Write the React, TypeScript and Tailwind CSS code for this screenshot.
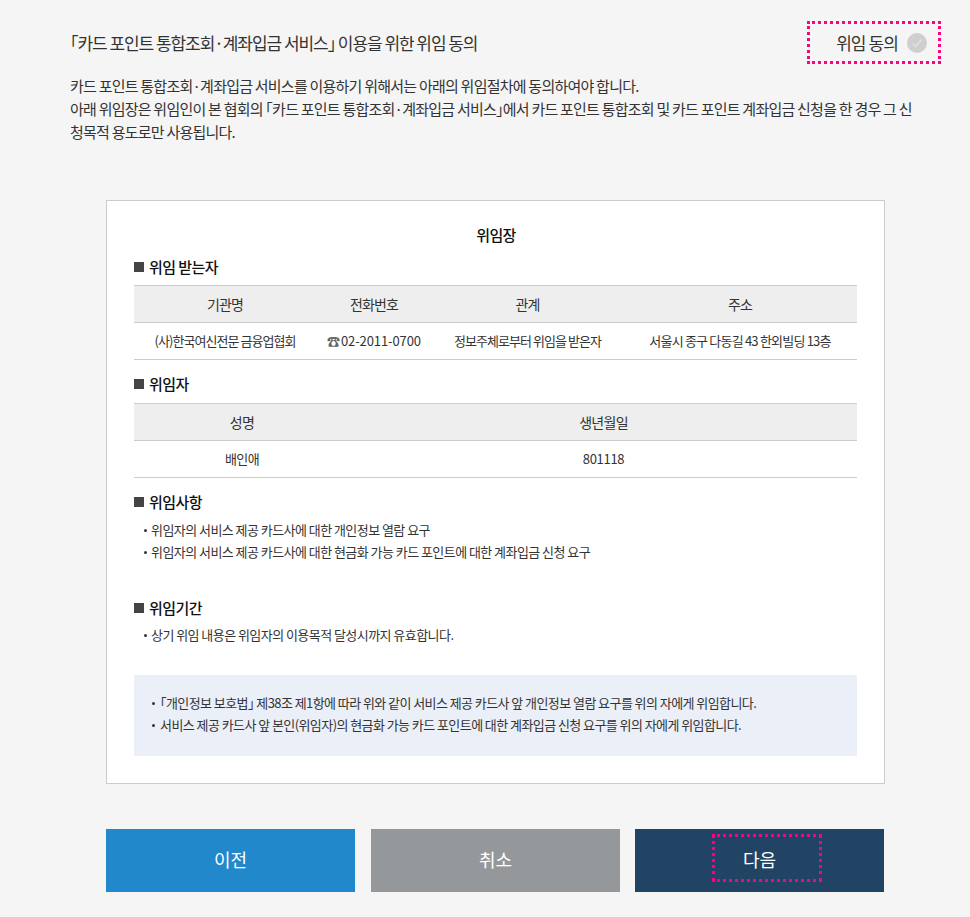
const font = { fontFamily: '"Noto Sans CJK KR", "Noto Sans", sans-serif' }

function SectionTitle({ children }: { children: string }) {
  return (
    <h3 className="flex items-center h-[20px] text-[15px] font-medium text-[#111] tracking-[-0.55px]">
      <span className="w-[10px] h-[10px] bg-[#444] mr-[5px]" />
      {children}
    </h3>
  )
}

function Bullet({ children }: { children: React.ReactNode }) {
  return (
    <li className="flex h-[22px] items-center text-[13px] text-[#333] tracking-[-0.55px]">
      <span className="w-[3px] h-[3px] rounded-full bg-[#333] ml-[10px] mr-[4px]" />
      {children}
    </li>
  )
}

function NoticeBullet({ children }: { children: React.ReactNode }) {
  return (
    <li className="flex h-[22px] items-center text-[13px] text-[#333] tracking-[-0.57px]">
      <span className="w-[3px] h-[3px] rounded-full bg-[#333] ml-[18px] mr-[5px]" />
      {children}
    </li>
  )
}

export default function App() {
  return (
    <div style={font} className="w-[970px] h-[917px] bg-[#f5f5f5] overflow-hidden">
      {/* Header */}
      <div className="flex items-center justify-between h-[43px] mt-[21px] pl-[70px] pr-[29px] pt-0">
        <h2 className="text-[17px] text-[#333] tracking-[-1.05px]">｢카드 포인트 통합조회·계좌입금 서비스｣ 이용을 위한 위임 동의</h2>
        <button className="flex items-center justify-end w-[134px] h-[43px] border-[3px] border-dotted border-[#ff0080] pr-[11px] text-[17px] text-[#333] tracking-[-0.9px]">
          위임 동의
          <svg className="ml-[9px]" width="20" height="20" viewBox="0 0 20 20">
            <circle cx="10" cy="10" r="10" fill="#cfcfcf" />
            <path d="M5.5 10.5l3 3 6-7" fill="none" stroke="#e2e2e2" strokeWidth="1.4" />
          </svg>
        </button>
      </div>

      <p className="mt-[10px] pl-[70px] pr-[56px] text-[15px] leading-[23px] text-[#333] tracking-[-0.77px] break-all">
        카드 포인트 통합조회·계좌입금 서비스를 이용하기 위해서는 아래의 위임절차에 동의하여야 합니다.<br />
        아래 위임장은 위임인이 본 협회의 ｢카드 포인트 통합조회·계좌입금 서비스｣에서 카드 포인트 통합조회 및 카드 포인트 계좌입금 신청을 한 경우 그 신청목적 용도로만 사용됩니다.
      </p>

      {/* Card */}
      <div className="mt-[57px] ml-[106px] w-[779px] h-[584px] bg-white border border-[#ccc] px-[27px] pt-[24px]">
        <h1 className="text-center pl-[1px] text-[15px] h-[20px] leading-[20px] font-medium text-[#111] tracking-[-0.6px]">위임장</h1>

        <div className="mt-[12px]"><SectionTitle>위임 받는자</SectionTitle></div>
        <table className="mt-[8px] w-[723px] table-fixed border-collapse text-[13px] text-[#333] tracking-[-0.95px] text-center">
          <thead>
            <tr className="h-[37px] bg-[#eee] border-y border-[#ccc] text-[14px]">
              <th className="w-[182px] font-normal tracking-[-0.85px]">기관명</th>
              <th className="w-[116px] font-normal tracking-[-0.85px]">전화번호</th>
              <th className="w-[191px] font-normal tracking-[-0.85px]">관계</th>
              <th className="font-normal tracking-[-0.85px]">주소</th>
            </tr>
          </thead>
          <tbody>
            <tr className="h-[37px] border-b border-[#ccc]">
              <td>(사)한국여신전문 금융업협회</td>
              <td className="tracking-[-0.1px]"><span className="text-[13px] text-[#666] mr-[1px]">☎</span>02-2011-0700</td>
              <td>정보주체로부터 위임을 받은자</td>
              <td className="tracking-[-0.8px]">서울시 종구 다동길 43 한외빌딩 13층</td>
            </tr>
          </tbody>
        </table>

        <div className="mt-[14px]"><SectionTitle>위임자</SectionTitle></div>
        <table className="mt-[9px] w-[723px] table-fixed border-collapse text-[13px] text-[#333] tracking-[-0.7px] text-center">
          <thead>
            <tr className="h-[37px] bg-[#eee] border-y border-[#ccc] text-[14px]">
              <th className="w-[216px] font-normal">성명</th>
              <th className="font-normal">생년월일</th>
            </tr>
          </thead>
          <tbody>
            <tr className="h-[37px] border-b border-[#ccc]">
              <td>배인애</td>
              <td className="tracking-[-0.3px]">801118</td>
            </tr>
          </tbody>
        </table>

        <div className="mt-[14px]"><SectionTitle>위임사항</SectionTitle></div>
        <ul className="mt-[7px]">
          <Bullet>위임자의 서비스 제공 카드사에 대한 개인정보 열람 요구</Bullet>
          <Bullet>위임자의 서비스 제공 카드사에 대한 현금화 가능 카드 포인트에 대한 계좌입금 신청 요구</Bullet>
        </ul>

        <div className="mt-[35px]"><SectionTitle>위임기간</SectionTitle></div>
        <ul className="mt-[6px]">
          <Bullet>상기 위임 내용은 위임자의 이용목적 달성시까지 유효합니다.</Bullet>
        </ul>

        <div className="mt-[29px] h-[81px] bg-[#ebeff8] pt-[17px]">
          <ul>
            <NoticeBullet>｢개인정보 보호법｣ 제38조 제1항에 따라 위와 같이 서비스 제공 카드사 앞 개인정보 열람 요구를 위의 자에게 위임합니다.</NoticeBullet>
            <NoticeBullet>서비스 제공 카드사 앞 본인(위임자)의 현금화 가능 카드 포인트에 대한 계좌입금 신청 요구를 위의 자에게 위임합니다.</NoticeBullet>
          </ul>
        </div>
      </div>

      {/* Buttons */}
      <div className="flex mt-[45px] ml-[106px] gap-[16px] text-[18px] text-white">
        <button className="w-[249px] h-[63px] pb-[3px] bg-[#2188cc]">이전</button>
        <button className="w-[249px] h-[63px] pb-[3px] bg-[#95989b]">취소</button>
        <button className="relative w-[249px] h-[63px] pb-[3px] bg-[#224464] -ml-[1px]">
          다음
          <span className="absolute left-[77px] top-[5px] w-[110px] h-[48px] border-[3px] border-dotted border-[#ff0080]" />
        </button>
      </div>
    </div>
  )
}
